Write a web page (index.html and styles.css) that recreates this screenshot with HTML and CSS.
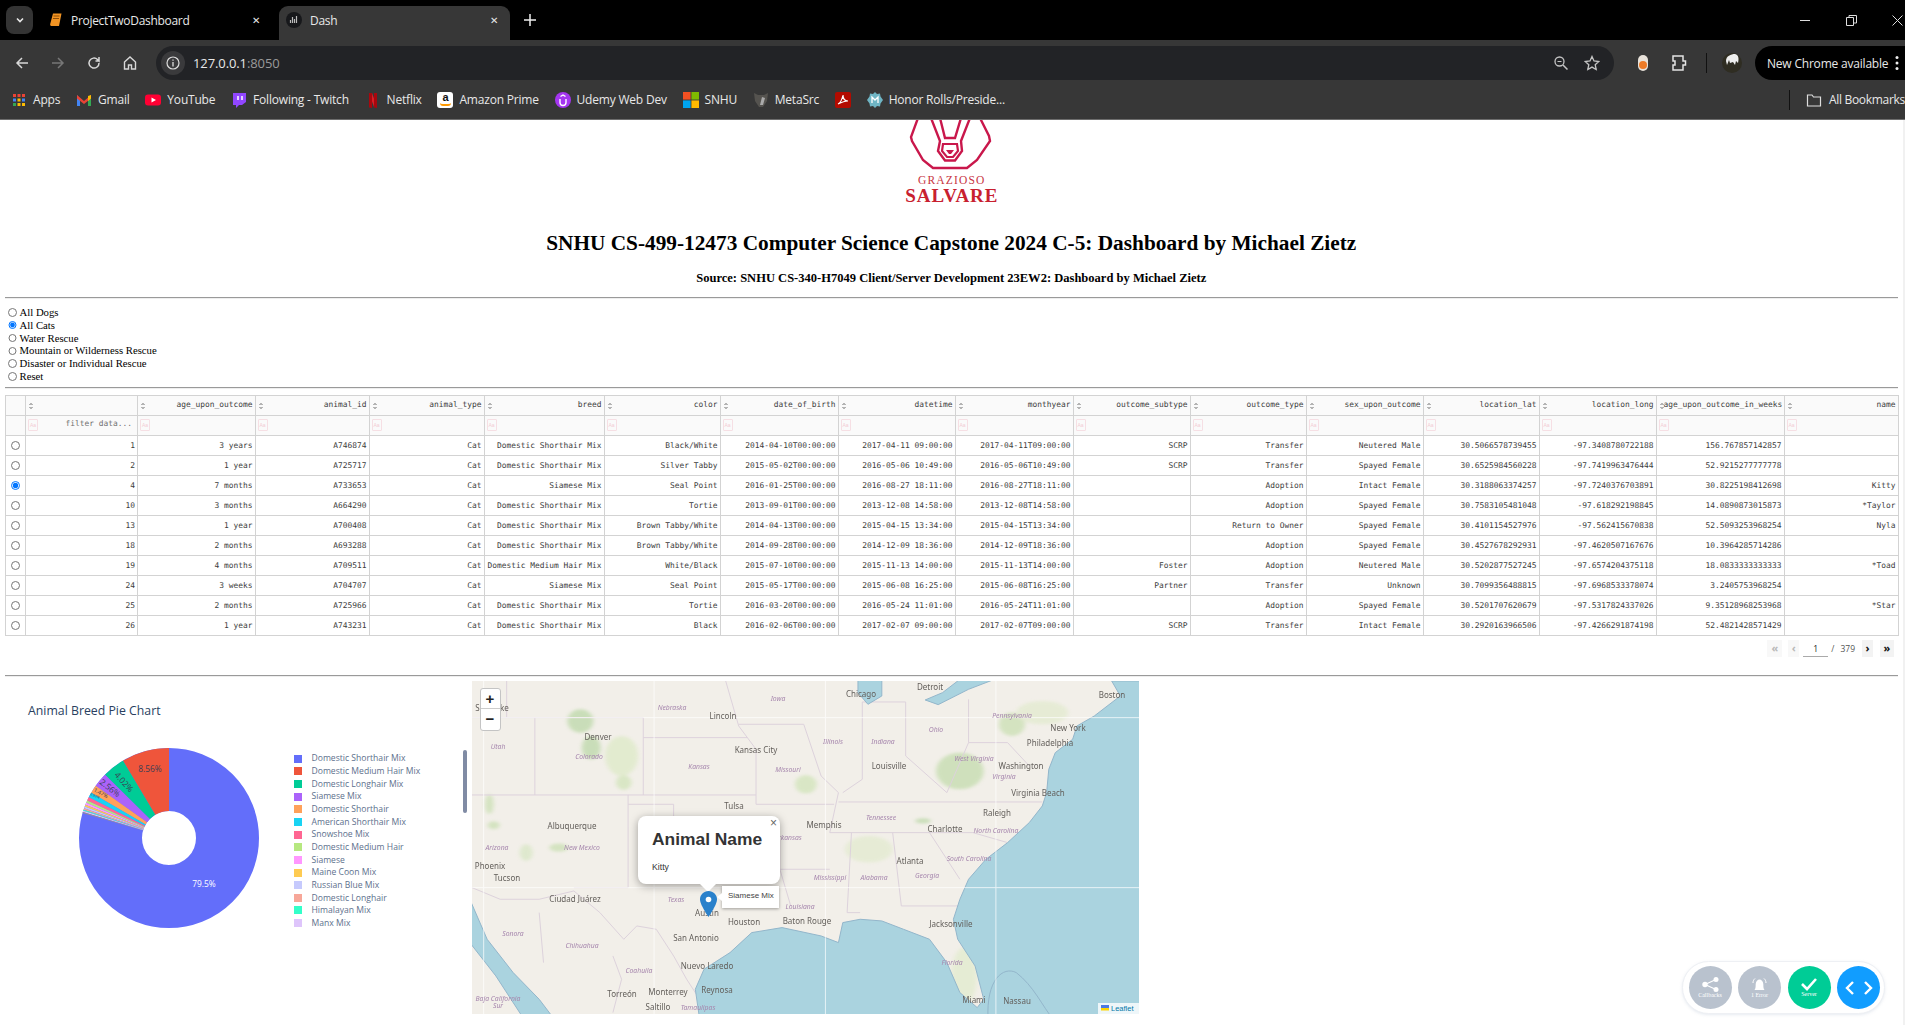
FILE: index.html
```html
<!DOCTYPE html>
<html lang="en">
<head>
  <meta charset="UTF-8" />
  <title>Dash</title>
  <link rel="stylesheet" href="styles.css">
</head>
<body>
  <header class="chrome">
    <div class="tabstrip">
      <div class="tab-search"><svg width="10" height="10" viewBox="0 0 10 10"><path d="M2 3.500 5 6.500 8 3.500" fill="none" stroke="#e8e8e8" stroke-width="1.600"/></svg></div>
      <div class="tab">
        <svg width="16" height="16" viewBox="0 0 16 16"><path d="M5 1.500h8.500L11 14H3.200a1.500 1.500 0 0 1-1-2z" fill="#f29423"/><path d="M5.500 4h6M5 6.500h6" stroke="#8a4c08"/></svg>
        <span class="tab-title">ProjectTwoDashboard</span>
        <span class="tab-close">✕</span>
      </div>
      <div class="tab active">
        <svg width="16" height="16" viewBox="0 0 16 16"><circle cx="8" cy="8" r="8" fill="#17181b"/><path d="M4.500 11V8M6.500 11V5M8.500 11V7M10.500 11V4" stroke="#bbb" stroke-width="1.200"/></svg>
        <span class="tab-title">Dash</span>
        <span class="tab-close">✕</span>
      </div>
      <div class="tab-new"><svg width="12" height="12" viewBox="0 0 12 12"><path d="M6 0v12M0 6h12" stroke="#eee" stroke-width="1.500"/></svg></div>
      <div class="window-controls">
        <span><svg width="11" height="11" viewBox="0 0 11 11"><path d="M0 5.500h10" stroke="#ddd"/></svg></span>
        <span><svg width="11" height="11" viewBox="0 0 11 11"><path d="M.5 2.500h7v8h-7zM3 2.500V.5h7.500v7.500H7.500" fill="none" stroke="#ddd"/></svg></span>
        <span><svg width="11" height="11" viewBox="0 0 11 11"><path d="M.5.500l10 10M10.500.500l-10 10" stroke="#ddd"/></svg></span>
      </div>
    </div>

    <div class="toolbar">
      <div class="nav-btn"><svg width="16" height="16" viewBox="0 0 16 16"><path d="M14 8H3M8 3 3 8l5 5" fill="none" stroke="#d8d8d8" stroke-width="1.500"/></svg></div>
      <div class="nav-btn"><svg width="16" height="16" viewBox="0 0 16 16"><path d="M2 8h11M8 3l5 5-5 5" fill="none" stroke="#777" stroke-width="1.500"/></svg></div>
      <div class="nav-btn"><svg width="16" height="16" viewBox="0 0 16 16"><path d="M13 8a5 5 0 1 1-1.500-3.500L13 6V2M13 6H9.500" fill="none" stroke="#d8d8d8" stroke-width="1.500"/></svg></div>
      <div class="nav-btn"><svg width="16" height="16" viewBox="0 0 16 16"><path d="M2.500 7 8 2l5.500 5v7h-4v-4h-3v4h-4z" fill="none" stroke="#d8d8d8" stroke-width="1.400"/></svg></div>
      <div class="omnibox">
        <span class="site-info"><svg width="14" height="14" viewBox="0 0 14 14"><circle cx="7" cy="7" r="6" fill="none" stroke="#ddd" stroke-width="1.200"/><path d="M7 6v4.500M7 3.500v1.300" stroke="#ddd" stroke-width="1.300"/></svg></span>
        <span class="url">127.0.0.1<span class="url-port">:8050</span></span>
        <span class="omni-right">
          <svg width="16" height="16" viewBox="0 0 16 16"><circle cx="6.500" cy="6.500" r="4.500" fill="none" stroke="#c4c4c4" stroke-width="1.300"/><path d="m10 10 4.500 4.500" stroke="#c4c4c4" stroke-width="1.500"/><path d="M4.500 6.500h4" stroke="#c4c4c4"/></svg>
          <svg width="16" height="16" viewBox="0 0 16 16"><path d="m8 1.500 2 4.500 4.800.5-3.600 3.200 1 4.800L8 12.100l-4.200 2.400 1-4.800L1.200 6.500 6 6z" fill="none" stroke="#c4c4c4" stroke-width="1.300"/></svg>
        </span>
      </div>
      <div class="tool-btn first"><svg width="12" height="18" viewBox="0 0 12 18"><rect x="1" y="1" width="10" height="16" rx="5" fill="#e8e2da"/><circle cx="6" cy="11" r="4" fill="#ee7b26"/></svg></div>
      <div class="tool-btn"><svg width="16" height="18" viewBox="0 0 16 18"><path d="M2 2h10v5h2.500v4H12v5H2v-5h2V7H2z" fill="none" stroke="#e4e4e4" stroke-width="1.500"/></svg></div>
      <div class="tool-sep"></div>
      <div class="avatar"><svg width="20" height="20" viewBox="0 0 20 20"><circle cx="10" cy="10" r="10" fill="#2f2d22"/><path d="M4 8c0-5 5-7 9-7 4 1 4 5 3 9l-2-2-1 4-2-3-3 1-1-3-2 5z" fill="#eee"/></svg></div>
      <div class="update-pill">
        <span>New Chrome available</span>
        <svg width="4" height="16" viewBox="0 0 4 16"><circle cx="2" cy="2.500" r="1.500" fill="#eee"/><circle cx="2" cy="8" r="1.500" fill="#eee"/><circle cx="2" cy="13.500" r="1.500" fill="#eee"/></svg>
      </div>
    </div>

    <div class="bookmarks">
      <a class="bm"><svg width="16" height="16" viewBox="0 0 16 16"><path d="M2 2h3v3H2z" fill="#ea4335"/><path d="M6.500 2h3v3h-3z" fill="#ea4335"/><path d="M11 2h3v3h-3z" fill="#ea4335"/><path d="M2 6.500h3v3H2z" fill="#4285f4"/><path d="M6.500 6.500h3v3h-3z" fill="#fbbc04"/><path d="M11 6.500h3v3h-3z" fill="#4285f4"/><path d="M2 11h3v3H2z" fill="#34a853"/><path d="M6.500 11h3v3h-3z" fill="#fbbc04"/><path d="M11 11h3v3h-3z" fill="#fbbc04"/></svg>Apps</a>
      <a class="bm"><svg width="16" height="16" viewBox="0 0 16 16"><path d="M1 3v11h3V7z" fill="#4285f4"/><path d="M15 3v11h-3V7z" fill="#34a853"/><path d="m1 3 7 6 7-6v3.500L8 12 1 6.500z" fill="#ea4335"/><path d="m12 4 3-1v3.500L12 9z" fill="#fbbc04"/></svg>Gmail</a>
      <a class="bm"><svg width="16" height="16" viewBox="0 0 16 16"><rect y="2.500" width="16" height="11" rx="3" fill="#ff0033"/><path d="m6.500 5.500 4.500 2.500-4.500 2.500z" fill="#fff"/></svg>YouTube</a>
      <a class="bm"><svg width="16" height="16" viewBox="0 0 16 16"><path d="M2 1h13v9l-4 3H8l-3 3v-3H2z" fill="#9146ff"/><path d="M7 4v4M11 4v4" stroke="#fff" stroke-width="1.500"/></svg>Following - Twitch</a>
      <a class="bm"><svg width="16" height="16" viewBox="0 0 16 16"><path d="M4 1h3l5 14H9z" fill="#d81f26"/><path d="M4 1h3v15l-3-.5zM9 1h3v15l-3-.5z" fill="#a8070e"/></svg>Netflix</a>
      <a class="bm"><span class="amz"><b>a</b><i></i></span>Amazon Prime</a>
      <a class="bm"><svg width="16" height="16" viewBox="0 0 16 16"><circle cx="8" cy="8" r="8" fill="#a435f0"/><path d="M5 7v3.500a3 3 0 0 0 6 0V7M5.500 4.500 8 3l2.500 1.500" fill="none" stroke="#fff" stroke-width="1.400"/></svg>Udemy Web Dev</a>
      <a class="bm"><svg width="16" height="16" viewBox="0 0 16 16"><path d="M0 0h7.600v7.600H0z" fill="#f25022"/><path d="M8.400 0H16v7.600H8.400z" fill="#7fba00"/><path d="M0 8.400h7.600V16H0z" fill="#00a4ef"/><path d="M8.400 8.400H16V16H8.400z" fill="#ffb900"/></svg>SNHU</a>
      <a class="bm"><svg width="16" height="16" viewBox="0 0 16 16"><path d="M1 1l4 2h6l4-2-1 8-4 6H6L2 9z" fill="#55534f"/><path d="M9 5l3 1-2 7H7z" fill="#aaa"/></svg>MetaSrc</a>
      <a class="bm no-label"><svg width="16" height="16" viewBox="0 0 16 16"><rect width="16" height="16" rx="2" fill="#b30b00"/><path d="M3 12c2-1 4-4 5-9 0 4 2 6 5 6-3 0-6 1-10 3z" fill="none" stroke="#fff" stroke-width="1.200"/></svg></a>
      <a class="bm"><svg width="16" height="16" viewBox="0 0 16 16"><path d="m8 0 2 2 3-.5.5 3L16 8l-2.500 3.500-.5 3-3-.5-2 2-2-2-3 .5-.5-3L0 8l2.500-3.500.5-3 3 .5z" fill="#6fb5c4"/><path d="M5 11V5l3 3 3-3v6" fill="none" stroke="#fff" stroke-width="1.300"/></svg>Honor Rolls/Preside...</a>
      <div class="bm-right">
        <div class="tool-sep"></div>
        <svg width="16" height="16" viewBox="0 0 16 16"><path d="M1.500 3h4.500l1.500 2h7v9h-13z" fill="none" stroke="#ddd" stroke-width="1.200"/></svg>
        <span>All Bookmarks</span>
      </div>
    </div>
  </header>

  <main class="page">
    <div class="brand">
      <svg class="brand-mark" width="130" height="52" viewBox="-3 2 130 52">
        <path d="M28 0 21 19l1 4 11 19 10 8h34l10-8 13-19-1-5-9-18" fill="none" stroke="#c9174b" stroke-width="2.400"/>
        <path d="M41 0l9 23-2 10 7 9.500h10l7-9.500-1-10 9-23" fill="none" stroke="#c9174b" stroke-width="2.400"/>
        <path d="M50 0l5 20h10l6-20" fill="none" stroke="#c9174b" stroke-width="2.400"/>
        <path d="M53 26h14l1 7-5 6h-6l-5-6z" fill="none" stroke="#c9174b" stroke-width="2.200"/>
        <path d="M56 32h8l-3 4h-2z" fill="#c9174b"/>
      </svg>
      <div class="brand-small">GRAZIOSO</div>
      <div class="brand-big">SALVARE</div>
    </div>
    <h1 class="title">SNHU CS-499-12473 Computer Science Capstone 2024 C-5: Dashboard by Michael Zietz</h1>
    <h3 class="subtitle">Source: SNHU CS-340-H7049 Client/Server Development 23EW2: Dashboard by Michael Zietz</h3>
    <hr class="rule">

    <div class="filters">
      <label><input type="radio" name="type"> All Dogs</label>
      <label><input type="radio" name="type" checked> All Cats</label>
      <label><input type="radio" name="type"> Water Rescue</label>
      <label><input type="radio" name="type"> Mountain or Wilderness Rescue</label>
      <label><input type="radio" name="type"> Disaster or Individual Rescue</label>
      <label><input type="radio" name="type"> Reset</label>
    </div>
    <hr class="rule rule-filters">

    <table class="grid">
      <colgroup>
        <col class="c-sel"><col class="c-id"><col class="c-age"><col class="c-aid"><col class="c-type"><col class="c-breed"><col class="c-color"><col class="c-dob"><col class="c-dt"><col class="c-my"><col class="c-sub"><col class="c-out"><col class="c-sex"><col class="c-lat"><col class="c-long"><col class="c-weeks"><col class="c-name">
      </colgroup>
      <thead>
        <tr>
          <th class="sel"></th><th></th><th>age_upon_outcome</th><th>animal_id</th><th>animal_type</th><th>breed</th><th>color</th><th>date_of_birth</th><th>datetime</th><th>monthyear</th><th>outcome_subtype</th><th>outcome_type</th><th>sex_upon_outcome</th><th>location_lat</th><th>location_long</th><th>age_upon_outcome_in_weeks</th><th>name</th>
        </tr>
        <tr class="filter-row">
          <td class="sel"></td><td><span class="aa">Aa</span><span class="ph">filter data...</span></td><td><span class="aa">Aa</span></td><td><span class="aa">Aa</span></td><td><span class="aa">Aa</span></td><td><span class="aa">Aa</span></td><td><span class="aa">Aa</span></td><td><span class="aa">Aa</span></td><td><span class="aa">Aa</span></td><td><span class="aa">Aa</span></td><td><span class="aa">Aa</span></td><td><span class="aa">Aa</span></td><td><span class="aa">Aa</span></td><td><span class="aa">Aa</span></td><td><span class="aa">Aa</span></td><td><span class="aa">Aa</span></td><td><span class="aa">Aa</span></td>
        </tr>
      </thead>
      <tbody>
        <tr><td class="sel"><input type="radio" name="row"></td><td>1</td><td>3 years</td><td>A746874</td><td>Cat</td><td>Domestic Shorthair Mix</td><td>Black/White</td><td>2014-04-10T00:00:00</td><td>2017-04-11 09:00:00</td><td>2017-04-11T09:00:00</td><td>SCRP</td><td>Transfer</td><td>Neutered Male</td><td>30.5066578739455</td><td>-97.3408780722188</td><td>156.767857142857</td><td></td></tr>
        <tr><td class="sel"><input type="radio" name="row"></td><td>2</td><td>1 year</td><td>A725717</td><td>Cat</td><td>Domestic Shorthair Mix</td><td>Silver Tabby</td><td>2015-05-02T00:00:00</td><td>2016-05-06 10:49:00</td><td>2016-05-06T10:49:00</td><td>SCRP</td><td>Transfer</td><td>Spayed Female</td><td>30.6525984560228</td><td>-97.7419963476444</td><td>52.9215277777778</td><td></td></tr>
        <tr><td class="sel"><input type="radio" name="row" checked></td><td>4</td><td>7 months</td><td>A733653</td><td>Cat</td><td>Siamese Mix</td><td>Seal Point</td><td>2016-01-25T00:00:00</td><td>2016-08-27 18:11:00</td><td>2016-08-27T18:11:00</td><td></td><td>Adoption</td><td>Intact Female</td><td>30.3188063374257</td><td>-97.7240376703891</td><td>30.8225198412698</td><td>Kitty</td></tr>
        <tr><td class="sel"><input type="radio" name="row"></td><td>10</td><td>3 months</td><td>A664290</td><td>Cat</td><td>Domestic Shorthair Mix</td><td>Tortie</td><td>2013-09-01T00:00:00</td><td>2013-12-08 14:58:00</td><td>2013-12-08T14:58:00</td><td></td><td>Adoption</td><td>Spayed Female</td><td>30.7583105481048</td><td>-97.618292198845</td><td>14.0890873015873</td><td>*Taylor</td></tr>
        <tr><td class="sel"><input type="radio" name="row"></td><td>13</td><td>1 year</td><td>A700408</td><td>Cat</td><td>Domestic Shorthair Mix</td><td>Brown Tabby/White</td><td>2014-04-13T00:00:00</td><td>2015-04-15 13:34:00</td><td>2015-04-15T13:34:00</td><td></td><td>Return to Owner</td><td>Spayed Female</td><td>30.4101154527976</td><td>-97.562415670838</td><td>52.5093253968254</td><td>Nyla</td></tr>
        <tr><td class="sel"><input type="radio" name="row"></td><td>18</td><td>2 months</td><td>A693288</td><td>Cat</td><td>Domestic Shorthair Mix</td><td>Brown Tabby/White</td><td>2014-09-28T00:00:00</td><td>2014-12-09 18:36:00</td><td>2014-12-09T18:36:00</td><td></td><td>Adoption</td><td>Spayed Female</td><td>30.4527678292931</td><td>-97.4620507167676</td><td>10.3964285714286</td><td></td></tr>
        <tr><td class="sel"><input type="radio" name="row"></td><td>19</td><td>4 months</td><td>A709511</td><td>Cat</td><td>Domestic Medium Hair Mix</td><td>White/Black</td><td>2015-07-10T00:00:00</td><td>2015-11-13 14:00:00</td><td>2015-11-13T14:00:00</td><td>Foster</td><td>Adoption</td><td>Neutered Male</td><td>30.5202877527245</td><td>-97.6574204375118</td><td>18.0833333333333</td><td>*Toad</td></tr>
        <tr><td class="sel"><input type="radio" name="row"></td><td>24</td><td>3 weeks</td><td>A704707</td><td>Cat</td><td>Siamese Mix</td><td>Seal Point</td><td>2015-05-17T00:00:00</td><td>2015-06-08 16:25:00</td><td>2015-06-08T16:25:00</td><td>Partner</td><td>Transfer</td><td>Unknown</td><td>30.7099356488815</td><td>-97.6968533378074</td><td>3.2405753968254</td><td></td></tr>
        <tr><td class="sel"><input type="radio" name="row"></td><td>25</td><td>2 months</td><td>A725966</td><td>Cat</td><td>Domestic Shorthair Mix</td><td>Tortie</td><td>2016-03-20T00:00:00</td><td>2016-05-24 11:01:00</td><td>2016-05-24T11:01:00</td><td></td><td>Adoption</td><td>Spayed Female</td><td>30.5201707620679</td><td>-97.5317824337026</td><td>9.35128968253968</td><td>*Star</td></tr>
        <tr><td class="sel"><input type="radio" name="row"></td><td>26</td><td>1 year</td><td>A743231</td><td>Cat</td><td>Domestic Shorthair Mix</td><td>Black</td><td>2016-02-06T00:00:00</td><td>2017-02-07 09:00:00</td><td>2017-02-07T09:00:00</td><td>SCRP</td><td>Transfer</td><td>Intact Female</td><td>30.2920163966506</td><td>-97.4266291874198</td><td>52.4821428571429</td><td></td></tr>
      </tbody>
    </table>

    <div class="pager">
      <span class="pg-btn pg-first off">«</span>
      <span class="pg-btn pg-prev off">‹</span>
      <span class="pg-input">1</span>
      <span class="pg-slash">/</span>
      <span class="pg-total">379</span>
      <span class="pg-btn pg-next">›</span>
      <span class="pg-btn pg-last">»</span>
    </div>
    <hr class="rule rule-table">

    <section class="charts">
      <div class="pie-panel">
        <div class="pie-title">Animal Breed Pie Chart</div>
        <div class="pie-body">
          <svg class="pie" width="180" height="180" viewBox="0 0 180 180">
            <g transform="translate(90 90) rotate(-90) scale(1 -1)" fill="none" stroke-width="63">
              <circle r="58.500" stroke="#636efa"/>
              <circle r="58.500" pathLength="100" stroke="#ef553b" stroke-dasharray="8.56 100"/>
              <circle r="58.500" pathLength="100" stroke="#00cc96" stroke-dasharray="4.02 100" stroke-dashoffset="-8.56"/>
              <circle r="58.500" pathLength="100" stroke="#ab63fa" stroke-dasharray="2.56 100" stroke-dashoffset="-12.58"/>
              <circle r="58.500" pathLength="100" stroke="#ffa15a" stroke-dasharray="1.47 100" stroke-dashoffset="-15.14"/>
              <circle r="58.500" pathLength="100" stroke="#19d3f3" stroke-dasharray="0.92 100" stroke-dashoffset="-16.61"/>
              <circle r="58.500" pathLength="100" stroke="#ff6692" stroke-dasharray="0.62 100" stroke-dashoffset="-17.53"/>
              <circle r="58.500" pathLength="100" stroke="#b6e880" stroke-dasharray="0.42 100" stroke-dashoffset="-18.15"/>
              <circle r="58.500" pathLength="100" stroke="#ff97ff" stroke-dasharray="0.4 100" stroke-dashoffset="-18.57"/>
              <circle r="58.500" pathLength="100" stroke="#fecb52" stroke-dasharray="0.35 100" stroke-dashoffset="-18.97"/>
              <circle r="58.500" pathLength="100" stroke="#c6cafd" stroke-dasharray="0.3 100" stroke-dashoffset="-19.32"/>
              <circle r="58.500" pathLength="100" stroke="#f7a799" stroke-dasharray="0.28 100" stroke-dashoffset="-19.62"/>
              <circle r="58.500" pathLength="100" stroke="#33ffc9" stroke-dasharray="0.2 100" stroke-dashoffset="-19.9"/>
              <circle r="58.500" pathLength="100" stroke="#dec5fb" stroke-dasharray="0.22 100" stroke-dashoffset="-20.1"/>
              <circle r="58.500" pathLength="100" stroke="#9a8f8f" stroke-dasharray="0.18 100" stroke-dashoffset="-20.32"/>
            </g>
            <text class="pct pct-white" x="125" y="139">79.5%</text>
            <text class="pct" x="71" y="24">8.56%</text>
            <text class="pct" transform="translate(45 34) rotate(48)" y="3">4.02%</text>
            <text class="pct" transform="translate(31 40) rotate(38)" y="3">2.56%</text>
            <text class="pct pct-small" transform="translate(22 45) rotate(28)" y="2">1.47%</text>
            <text class="pct pct-tiny" transform="translate(16 48) rotate(20)" y="1">0.92%</text>
          </svg>
          <ul class="legend">
            <li><i class="sw s1"></i>Domestic Shorthair Mix</li>
            <li><i class="sw s2"></i>Domestic Medium Hair Mix</li>
            <li><i class="sw s3"></i>Domestic Longhair Mix</li>
            <li><i class="sw s4"></i>Siamese Mix</li>
            <li><i class="sw s5"></i>Domestic Shorthair</li>
            <li><i class="sw s6"></i>American Shorthair Mix</li>
            <li><i class="sw s7"></i>Snowshoe Mix</li>
            <li><i class="sw s8"></i>Domestic Medium Hair</li>
            <li><i class="sw s9"></i>Siamese</li>
            <li><i class="sw s10"></i>Maine Coon Mix</li>
            <li><i class="sw s11"></i>Russian Blue Mix</li>
            <li><i class="sw s12"></i>Domestic Longhair</li>
            <li><i class="sw s13"></i>Himalayan Mix</li>
            <li><i class="sw s14"></i>Manx Mix</li>
          </ul>
          <div class="legend-scroll"></div>
        </div>
      </div>

      <div class="map">
        <svg class="tiles" width="667" height="333" viewBox="0 0 667 333">
          <g transform="translate(-2.200 -1.700) scale(.4337 .3333)">
            <rect x="0" y="0" width="1560" height="1020" fill="#f2efe9"/>
            <g class="greens">
              <ellipse cx="255" cy="125" rx="30" ry="35" fill="#a9d092"/>
              <ellipse cx="280" cy="205" rx="22" ry="35" fill="#a9d092"/>
              <ellipse cx="350" cy="230" rx="38" ry="60" fill="#d6e8bb"/>
              <ellipse cx="355" cy="310" rx="18" ry="22" fill="#c5e0a8"/>
              <ellipse cx="1130" cy="275" rx="55" ry="55" fill="#b3d598"/>
              <ellipse cx="1250" cy="135" rx="30" ry="35" fill="#bcdaa0"/>
              <ellipse cx="775" cy="315" rx="25" ry="28" fill="#c5e0a8"/>
              <ellipse cx="130" cy="520" rx="15" ry="25" fill="#cfe4b8"/>
              <ellipse cx="45" cy="375" rx="10" ry="30" fill="#bcdaa0"/>
              <ellipse cx="205" cy="505" rx="22" ry="12" fill="#bcdaa0"/>
              <ellipse cx="1045" cy="425" rx="18" ry="8" fill="#a9d092"/>
              <ellipse cx="920" cy="510" rx="55" ry="40" fill="#dde9c6"/>
              <ellipse cx="1140" cy="890" rx="30" ry="85" fill="#dceac4"/>
              <ellipse cx="1320" cy="100" rx="60" ry="35" fill="#dde9c6"/>
              <ellipse cx="55" cy="438" rx="14" ry="12" fill="#bcdaa0"/>
            </g>
            <g class="borders">
              <path d="M85 5V115M5 115H400M150 115V347M400 115V347M5 347H660"/>
              <path d="M400 175H640M590 5 620 140 660 210V375M620 135H770L810 290 850 340 830 460"/>
              <path d="M660 375H840M365 347V625M365 375H470V470L715 480V570L740 680M715 570H830"/>
              <path d="M5 625 70 660H160L240 635 300 700 355 780 385 740 430 750 470 830 500 900 530 960"/>
              <path d="M365 625H240M850 368H1320M830 460H1160L1240 490M880 460 870 700H900M975 460 995 680H1130"/>
              <path d="M905 68V300L860 340M1005 68V230M905 68H1005M1150 60V190H1240M1150 190 1100 340 1005 230"/>
              <path d="M1060 460 1130 600M160 700 170 850M330 830 350 900 330 1000M1240 190 1290 260"/>
            </g>
            <path class="water" d="M1560 5H1480L1500 50 1440 110 1400 140 1390 180 1350 220 1335 270 1330 340 1320 380 1290 430 1240 490 1190 540 1150 600 1130 660 1115 720 1125 780 1165 860 1185 960 1170 985 1130 940 1100 850 1060 780 1000 750 950 725 900 720 860 730 850 790 810 770 720 745 650 760 600 820 540 870 520 930 530 1020H1560Z"/>
            <path class="water" d="M0 660 40 780 100 880 160 960 195 1020H0Z"/>
            <path class="land" d="M0 790 60 890 125 1020H0Z"/>
            <path class="water" d="M895 0H950V50L918 75 895 40Z"/>
            <path class="water" d="M1050 62 1080 76 1150 30 1210 0H1130L1090 40Z"/>
            <path class="shoal" d="M1195 1020C1190 900 1230 860 1260 880 1300 920 1320 980 1345 1020"/>
            <path class="seams" d="M32 0V1020M425 0V1020M820 0V1020M1213 0V1020M0 115H1560M0 625H1560"/>
          </g>
          <g class="city">
            <text x="389" y="16.300">Chicago</text><text x="458" y="8.500">Detroit</text><text x="640" y="17">Boston</text><text x="251" y="37.600">Lincoln</text><text x="596" y="50">New York</text><text x="126" y="59">Denver</text><text x="578" y="65.300">Philadelphia</text><text x="284" y="71.600">Kansas City</text><text x="549" y="87.600">Washington</text><text x="417" y="88">Louisville</text><text x="566" y="115">Virginia Beach</text><text x="262" y="128">Tulsa</text><text x="525" y="135">Raleigh</text><text x="100" y="148">Albuquerque</text><text x="352" y="146.600">Memphis</text><text x="473" y="151">Charlotte</text><text x="438" y="183">Atlanta</text><text x="18" y="188.300">Phoenix</text><text x="35" y="200.300">Tucson</text><text x="103" y="220.600">Ciudad Juárez</text><text x="235" y="234.600">Austin</text><text x="272" y="243.600">Houston</text><text x="335" y="242.600">Baton Rouge</text><text x="479" y="245.600">Jacksonville</text><text x="224" y="260.300">San Antonio</text><text x="235" y="288.300">Nuevo Laredo</text><text x="245" y="312.300">Reynosa</text><text x="150" y="316">Torreón</text><text x="196" y="313.600">Monterrey</text><text x="186" y="329">Saltillo</text><text x="502" y="322.300">Miami</text><text x="545" y="322.600">Nassau</text><text x="20" y="29.600">Salt Lake</text>
          </g>
          <g class="state">
            <text x="306" y="20">Iowa</text><text x="200" y="29">Nebraska</text><text x="540" y="36.600">Pennsylvania</text><text x="464" y="51.300">Ohio</text><text x="361" y="63">Illinois</text><text x="411" y="63">Indiana</text><text x="26" y="68">Utah</text><text x="117" y="78.300">Colorado</text><text x="502" y="80">West Virginia</text><text x="227" y="88">Kansas</text><text x="316" y="91.300">Missouri</text><text x="532" y="98">Virginia</text><text x="409" y="139">Tennessee</text><text x="524" y="151.600">North Carolina</text><text x="316" y="159.300">Arkansas</text><text x="25" y="169.300">Arizona</text><text x="110" y="169.300">New Mexico</text><text x="497" y="180">South Carolina</text><text x="455" y="197">Georgia</text><text x="402" y="198.600">Alabama</text><text x="358" y="198.600">Mississippi</text><text x="328" y="227.600">Louisiana</text><text x="204" y="221.300">Texas</text><text x="41" y="254.600">Sonora</text><text x="110" y="267">Chihuahua</text><text x="167" y="292.300">Coahuila</text><text x="480" y="284">Florida</text><text x="26" y="319.600">Baja California</text><text x="26" y="327.300">Sur</text><text x="226" y="329">Tamaulipas</text>
          </g>
        </svg>
        <div class="zoom-ctl"><span>+</span><span>−</span></div>
        <div class="popup">
          <span class="popup-close">×</span>
          <div class="popup-title">Animal Name</div>
          <p class="popup-text">Kitty</p>
        </div>
        <div class="map-tip">Siamese Mix</div>
        <svg class="marker" width="17" height="26" viewBox="0 0 17 26"><path d="M8.500 0C3.800 0 0 3.700 0 8.300 0 14 8.500 26 8.500 26S17 14 17 8.300C17 3.700 13.200 0 8.500 0z" fill="#2a81cb"/><circle cx="8.500" cy="8.500" r="2.800" fill="#fff"/></svg>
        <div class="attribution"><svg width="8" height="6" viewBox="0 0 8 6"><path d="M0 0h8v3H0z" fill="#4c7be1"/><path d="M0 3h8v2.500H0z" fill="#ffd500"/></svg><a>Leaflet</a></div>
      </div>
    </section>
  </main>

  <div class="devtools">
    <div class="dev-btn"><svg width="17" height="15" viewBox="0 0 17 15"><circle cx="3" cy="7.500" r="2.700" fill="#fff"/><circle cx="14" cy="2.500" r="2.500" fill="#fff"/><circle cx="14" cy="12.500" r="2.500" fill="#fff"/><path d="M3 7.500 14 2.500M3 7.500l11 5" stroke="#fff" stroke-width="1.300"/></svg><span>Callbacks</span></div>
    <div class="dev-btn"><svg width="19" height="15" viewBox="0 0 19 15"><path d="M4.500 13c1.500-2 1-4 1.200-6 .3-3 2-4.500 3.800-4.500s3.500 1.500 3.800 4.500c.2 2-.3 4 1.200 6z" fill="#fff"/><path d="M3 6c0-2 .8-3.500 2-4.500M16 6c0-2-.8-3.500-2-4.500" fill="none" stroke="#fff"/></svg><span>1 Error</span></div>
    <div class="dev-btn ok"><svg width="18" height="14" viewBox="0 0 18 14"><path d="m2 7 5 5 9-10" fill="none" stroke="#fff" stroke-width="2.600"/></svg><span>Server</span></div>
    <div class="dev-btn toggle"><svg width="28" height="16" viewBox="0 0 28 16"><path d="M8 2 2 8l6 6M20 2l6 6-6 6" fill="none" stroke="#fff" stroke-width="2.400"/></svg></div>
  </div>
</body>
</html>
```

FILE: styles.css
```css
* {
  box-sizing: border-box;
}

html, body {
  margin: 0;
  padding: 0;
  height: 100%;
  overflow: hidden;
  background: #fff;
}

/* browser frame */
.chrome {
  height: 120px;
  font-family: "Open Sans", "Noto Sans", sans-serif;
  font-size: 12px;
  color: #e8e8e8;
}

.tabstrip {
  height: 40px;
  background: #000;
  display: flex;
  align-items: flex-end;
  overflow: hidden;
  padding-left: 6px;
}

.tab-search {
  width: 27px;
  height: 28px;
  margin: 0 8px 6px 0;
  border-radius: 8px;
  background: #343434;
  display: flex;
  align-items: center;
  justify-content: center;
}

.tab {
  width: 231px;
  height: 34px;
  padding: 0 10px 6px 7px;
  margin-right: 7px;
  display: flex;
  align-items: center;
  gap: 7px;
  border-radius: 9px 9px 0 0;
  flex-shrink: 0;
}

.tab.active {
  background: #373737;
  margin-right: 12px;
  gap: 8px;
}

.tab-title {
  flex: 1;
  letter-spacing: -0.3px;
}

.tab-close {
  font-size: 10px;
  width: 12px;
  text-align: center;
}

.tab-new {
  width: 16px;
  height: 34px;
  padding-bottom: 6px;
  display: flex;
  align-items: center;
  justify-content: center;
}

.window-controls {
  margin-left: auto;
  margin-right: -15px;
  height: 40px;
  display: flex;
  flex-shrink: 0;
}

.window-controls span {
  width: 46px;
  display: flex;
  align-items: center;
  justify-content: center;
}

.toolbar {
  height: 40px;
  background: #373737;
  padding: 6px 0 0 4px;
  display: flex;
  align-items: center;
}

.nav-btn {
  width: 36px;
  height: 34px;
  display: flex;
  align-items: center;
  justify-content: center;
}

.omnibox {
  width: 1458px;
  height: 34px;
  margin-left: 8px;
  border-radius: 17px;
  background: #222326;
  display: flex;
  align-items: center;
  font-size: 13px;
}

.site-info {
  width: 24px;
  height: 24px;
  margin: 0 8px 0 5px;
  border-radius: 50%;
  background: #3a3a3c;
  display: flex;
  align-items: center;
  justify-content: center;
}

.url {
  letter-spacing: -0.1px;
}

.url-port {
  color: #9a9a9a;
}

.omni-right {
  margin-left: auto;
  margin-right: 14px;
  display: flex;
  gap: 15px;
}

.tool-btn {
  width: 36px;
  height: 34px;
  display: flex;
  align-items: center;
  justify-content: center;
}

.tool-btn.first {
  margin-left: 11px;
}

.tool-sep {
  width: 1px;
  height: 20px;
  background: #111;
}

.toolbar .tool-sep {
  margin-left: 9px;
}

.avatar {
  width: 20px;
  height: 20px;
  margin: 0 13px 0 15px;
}

.update-pill {
  flex: 1;
  height: 34px;
  background: #000;
  border-radius: 17px 0 0 17px;
  padding: 0 6px 0 12px;
  display: flex;
  align-items: center;
  justify-content: space-between;
  white-space: nowrap;
  font-size: 12px;
  letter-spacing: -0.2px;
}

.bookmarks {
  height: 40px;
  background: #373737;
  border-bottom: 1px solid #6d6d6d;
  padding-left: 11px;
  display: flex;
  align-items: center;
  white-space: nowrap;
}

.bm {
  display: flex;
  align-items: center;
  gap: 6px;
  margin-right: 15.800px;
  letter-spacing: -0.2px;
}

.amz {
  width: 16px;
  height: 16px;
  background: #fff;
  border-radius: 3px;
  color: #111;
  display: flex;
  flex-direction: column;
  align-items: center;
  font-family: "Liberation Sans", sans-serif;
  font-size: 11px;
  line-height: 11px;
}

.amz i {
  width: 11px;
  height: 3px;
  border-bottom: 2px solid #f90;
  border-radius: 0 0 6px 6px;
}

.bm-right {
  margin-left: auto;
  display: flex;
  align-items: center;
  gap: 16px;
}

.bm-right span {
  margin-left: -9px;
  letter-spacing: -0.3px;
}

/* page */
.page {
  height: 905px;
  overflow: hidden;
  padding: 0 5.500px 0 5px;
  border-right: 2px solid #f1f1f1;
  font-family: "Liberation Serif", serif;
  color: #000;
}

.brand {
  display: flex;
  flex-direction: column;
  align-items: center;
  margin-left: 1px;
  color: #c8202f;
}

.brand-mark {
  display: block;
}

.brand-small {
  font-size: 11.500px;
  line-height: 12px;
  letter-spacing: 1.200px;
  margin-top: 2px;
  color: #c8343f;
}

.brand-big {
  font-size: 19px;
  line-height: 18px;
  font-weight: bold;
  letter-spacing: 0.9px;
  margin-top: 1px;
}

.title {
  margin: 26px 0 0;
  font-size: 21.300px;
  line-height: 25px;
  font-weight: bold;
  text-align: center;
}

.subtitle {
  margin: 14.500px 0 0;
  font-size: 12.540px;
  line-height: 15px;
  text-align: center;
}

.rule {
  margin: 11.500px 0 0;
  border: 0;
  border-top: 1px solid #9a9a9a;
  border-bottom: 1px solid #eee;
  height: 2px;
}

.filters {
  margin-top: 7px;
  font-size: 10.720px;
  display: flex;
  flex-direction: column;
}

.filters label {
  height: 12.800px;
  line-height: 12.800px;
  display: flex;
  align-items: center;
  gap: 3px;
  padding-left: 3px;
}

input[type="radio"] {
  margin: 0;
  width: 8.500px;
  height: 8.500px;
  accent-color: #0075ff;
}

.rule-filters {
  margin-top: 4px;
}

.rule-table {
  margin-top: 18px;
}

/* data table */
.grid {
  margin-top: 6px;
  width: 1892.500px;
  table-layout: fixed;
  border-collapse: collapse;
  font-family: "DejaVu Sans Mono", monospace;
  font-size: 7.900px;
  color: #3c3c3c;
}

.c-sel { width: 20px; }
.c-id { width: 112px; }
.c-age { width: 117.500px; }
.c-aid { width: 114px; }
.c-type { width: 115px; }
.c-breed { width: 120px; }
.c-color { width: 116px; }
.c-dob { width: 118px; }
.c-dt { width: 117px; }
.c-my { width: 118px; }
.c-sub { width: 117px; }
.c-out { width: 116px; }
.c-sex { width: 117px; }
.c-lat { width: 116px; }
.c-long { width: 117px; }
.c-weeks { width: 128px; }
.c-name { width: 114px; }

.grid th, .grid td {
  height: 20px;
  padding: 0 2px;
  border: 1px solid #d3d3d3;
  text-align: right;
  white-space: nowrap;
  overflow: hidden;
  font-weight: normal;
}

.grid thead tr {
  background: #fafafa;
}

.grid th::before {
  content: "";
  float: left;
  width: 4px;
  height: 8px;
  margin: 2px 0 0 1px;
  background:
    linear-gradient(to bottom right, transparent 50%, #b4b4b4 50%) left top / 2px 3px no-repeat,
    linear-gradient(to bottom left, transparent 50%, #b4b4b4 50%) right top / 2px 3px no-repeat,
    linear-gradient(to top right, transparent 50%, #b4b4b4 50%) left bottom / 2px 3px no-repeat,
    linear-gradient(to top left, transparent 50%, #b4b4b4 50%) right bottom / 2px 3px no-repeat;
}

.grid th.sel::before {
  display: none;
}

.grid td.sel {
  text-align: center;
  padding: 0;
}

.grid td.sel input {
  display: block;
  margin: 0 auto;
}

.aa {
  float: left;
  width: 10px;
  height: 12px;
  border: 1px solid #f6dfe4;
  border-radius: 1px;
  color: #f3ccd4;
  font-family: "Liberation Sans", sans-serif;
  font-size: 5px;
  line-height: 10px;
  text-align: center;
}

.ph {
  color: #6f6f6f;
  margin-right: 3px;
}

.pager {
  height: 17px;
  margin-top: 4px;
  padding-right: 3.500px;
  display: flex;
  justify-content: flex-end;
  align-items: center;
  font-family: "Open Sans", sans-serif;
  font-size: 8.500px;
  color: #555;
}

.pg-btn {
  height: 17px;
  background: #f3f3f3;
  color: #111;
  font-weight: bold;
  font-size: 11px;
  line-height: 15px;
  text-align: center;
}

.pg-btn.off {
  background: #f8f8f8;
  color: #b9b9b9;
}

.pg-first { width: 15px; margin-right: 6px; }
.pg-prev { width: 11px; margin-right: 4px; }
.pg-next { width: 11px; margin-right: 7px; }
.pg-last { width: 14px; }

.pg-input {
  width: 25px;
  height: 17px;
  line-height: 18px;
  border-bottom: 1px solid #aaa;
  text-align: center;
  color: #222;
}

.pg-slash { margin: 0 6px 0 3px; }
.pg-total { margin-right: 7px; }

/* pie and map */
.charts {
  margin-top: 4px;
  display: flex;
}

.pie-panel {
  width: 467px;
  font-family: "Open Sans", sans-serif;
  color: #2a3f5f;
}

.pie-title {
  margin: 22px 0 0 23px;
  font-size: 12.300px;
  line-height: 16px;
}

.pie-body {
  display: flex;
  margin-top: 29px;
}

.pie {
  margin-left: 74px;
  flex-shrink: 0;
}

.pct {
  font-size: 8.400px;
  fill: #3a3f55;
  text-anchor: middle;
  font-family: "Open Sans", sans-serif;
}

.pct-white { fill: #fff; }
.pct-small { font-size: 5.500px; }
.pct-tiny { font-size: 3.500px; }

.legend {
  width: 168.500px;
  list-style: none;
  margin: 4.500px 0 0 35px;
  padding: 0;
  font-size: 8.600px;
  color: #5c6f8c;
}

.legend li {
  height: 12.670px;
  line-height: 12.670px;
  display: flex;
  align-items: center;
  gap: 9.500px;
  white-space: nowrap;
}

.sw {
  width: 8px;
  height: 8px;
  flex-shrink: 0;
}

.s1 { background: #636efa; }
.s2 { background: #ef553b; }
.s3 { background: #00cc96; }
.s4 { background: #ab63fa; }
.s5 { background: #ffa15a; }
.s6 { background: #19d3f3; }
.s7 { background: #ff6692; }
.s8 { background: #b6e880; }
.s9 { background: #ff97ff; }
.s10 { background: #fecb52; }
.s11 { background: #c6cafd; }
.s12 { background: #f7a799; }
.s13 { background: #33ffc9; }
.s14 { background: #dec5fb; }

.legend-scroll {
  width: 4px;
  height: 63px;
  margin-top: 2px;
  border-radius: 2px;
  background: #808ba4;
}

.map {
  position: relative;
  width: 667px;
  height: 333px;
  overflow: hidden;
  flex-shrink: 0;
  font-family: "Liberation Sans", sans-serif;
}

.tiles {
  display: block;
  filter: blur(0.3px);
}

.greens {
  filter: blur(5px);
  opacity: 0.55;
}

.borders path {
  fill: none;
  stroke: #ddd2dc;
  stroke-width: 1px;
  vector-effect: non-scaling-stroke;
}

.water {
  fill: #aad3df;
  stroke: #93b6cb;
  stroke-width: 1px;
  vector-effect: non-scaling-stroke;
}

.land {
  fill: #f2efe9;
  stroke: #93b6cb;
  stroke-width: 1px;
  vector-effect: non-scaling-stroke;
}

.shoal {
  fill: none;
  stroke: #93b6cb;
  stroke-width: 1px;
  vector-effect: non-scaling-stroke;
}

.seams {
  fill: none;
  stroke: #fff;
  stroke-width: 1px;
  opacity: 0.7;
  vector-effect: non-scaling-stroke;
}

.city text {
  font-family: "Noto Sans", sans-serif;
  font-size: 8px;
  fill: #625e5a;
  text-anchor: middle;
}

.state text {
  font-family: "Noto Sans", sans-serif;
  font-size: 6.800px;
  font-style: italic;
  fill: #a686ad;
  text-anchor: middle;
}

.zoom-ctl {
  position: absolute;
  left: 7.500px;
  top: 7px;
  width: 21px;
  background: #fff;
  border: 1px solid #c4c4c4;
  border-radius: 3px;
  display: flex;
  flex-direction: column;
}

.zoom-ctl span {
  height: 20.500px;
  line-height: 20px;
  text-align: center;
  font-size: 15px;
  font-weight: bold;
  color: #222;
}

.zoom-ctl span:first-child {
  border-bottom: 1px solid #ccc;
}

.popup {
  position: absolute;
  left: 166px;
  top: 135px;
  width: 142px;
  height: 68px;
  padding: 14px 14px 0;
  background: #fff;
  border-radius: 8px;
  box-shadow: 0 2px 9px rgba(0, 0, 0, 0.35);
}

.popup::after {
  content: "";
  position: absolute;
  left: 62px;
  top: 68px;
  border: 8px solid transparent;
  border-bottom: 0;
  border-top-color: #fff;
}

.popup-close {
  position: absolute;
  right: 3px;
  top: 1px;
  font-size: 12px;
  line-height: 12px;
  color: #666;
}

.popup-title {
  font-size: 17.400px;
  line-height: 18px;
  font-weight: bold;
  color: #333;
  white-space: nowrap;
}

.popup-text {
  margin: 13px 0 0;
  font-size: 8.700px;
  line-height: 12px;
  color: #333;
}

.map-tip {
  position: absolute;
  left: 250px;
  top: 205px;
  width: 57px;
  height: 22px;
  padding-left: 6px;
  background: #fff;
  font-size: 8px;
  line-height: 20px;
  color: #444;
  box-shadow: 0 1px 3px rgba(0, 0, 0, 0.35);
}

.map-tip::before {
  content: "";
  position: absolute;
  left: -5px;
  top: 7px;
  border: 4px solid transparent;
  border-left: 0;
  border-right: 5px solid #fff;
}

.marker {
  position: absolute;
  left: 228px;
  top: 210px;
}

.attribution {
  position: absolute;
  right: 0;
  bottom: 0;
  height: 11px;
  width: 41px;
  padding-left: 3px;
  background: rgba(255, 255, 255, 0.8);
  display: flex;
  align-items: center;
  gap: 2px;
  font-size: 7.500px;
  color: #0078a8;
}

/* dash dev tools */
.devtools {
  position: absolute;
  left: 1682px;
  top: 961px;
  width: 203px;
  height: 53px;
  padding: 0 5.500px;
  background: #fff;
  border: 1px solid #eef0f4;
  border-radius: 27px;
  box-shadow: 0 1px 3px rgba(160, 175, 200, 0.25);
  display: flex;
  align-items: center;
  gap: 6.500px;
}

.dev-btn {
  width: 43px;
  height: 43px;
  border-radius: 50%;
  background: #b9c2ce;
  color: #fff;
  font-family: "Liberation Serif", serif;
  font-size: 6px;
  display: flex;
  flex-direction: column;
  align-items: center;
  justify-content: center;
  flex-shrink: 0;
}

.dev-btn span {
  line-height: 7px;
}

.dev-btn.ok {
  background: #00cc96;
}

.dev-btn.toggle {
  background: #119dff;
}
```
